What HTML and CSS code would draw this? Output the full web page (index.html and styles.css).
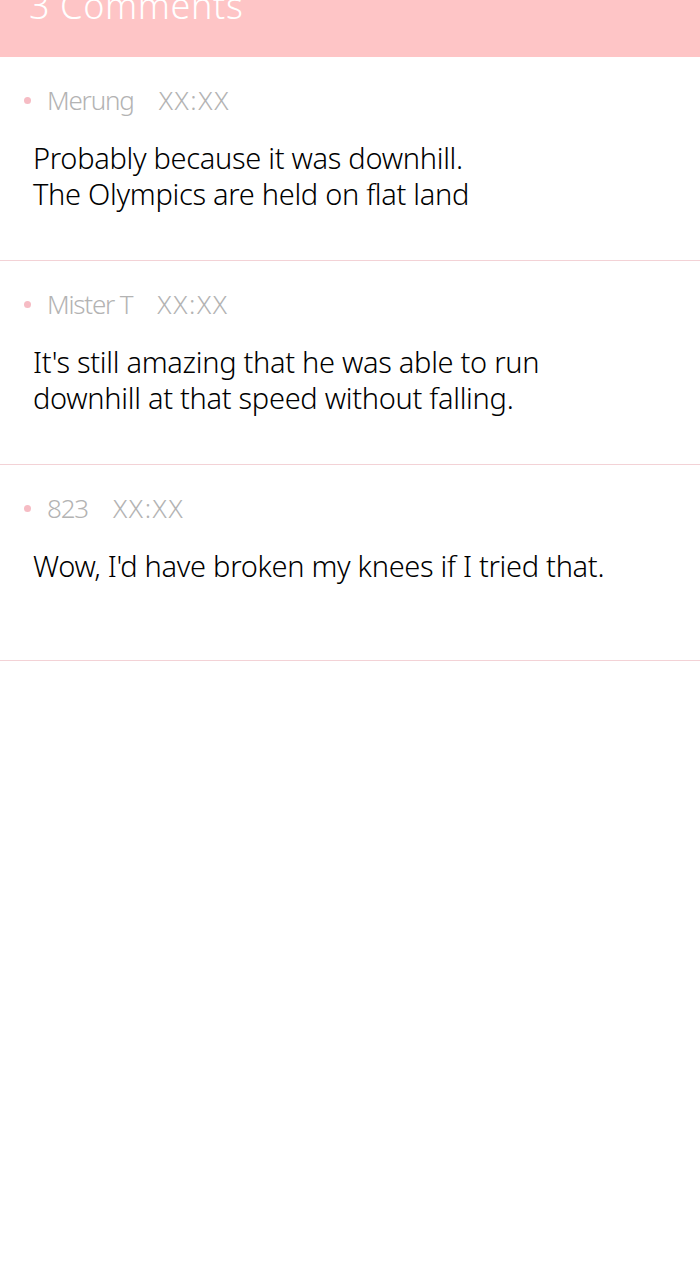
FILE: index.html
```html
<!DOCTYPE html>
<html lang="en">
<head>
  <meta charset="UTF-8">
  <meta name="viewport" content="width=device-width, initial-scale=1.0">
  <title>Comments</title>
  <link rel="stylesheet" href="styles.css">
</head>
<body>
  <header class="comments-header">
    <h1>3 Comments</h1>
  </header>

  <ul class="comment-list">
    <li class="comment">
      <div class="comment-meta">
        <span class="dot"></span>
        <span class="author">Merung</span>
        <span class="time">XX:XX</span>
      </div>
      <p class="comment-body">Probably because it was downhill.<br>The Olympics are held on flat land</p>
    </li>
    <li class="comment">
      <div class="comment-meta">
        <span class="dot"></span>
        <span class="author">Mister T</span>
        <span class="time">XX:XX</span>
      </div>
      <p class="comment-body">It's still amazing that he was able to run<br>downhill at that speed without falling.</p>
    </li>
    <li class="comment">
      <div class="comment-meta">
        <span class="dot"></span>
        <span class="author">823</span>
        <span class="time">XX:XX</span>
      </div>
      <p class="comment-body">Wow, I'd have broken my knees if I tried that.</p>
    </li>
  </ul>
</body>
</html>
```

FILE: styles.css
```css
body {
  font-family: "Noto Sans", Arial, sans-serif;
  margin: 0;
  padding: 0;
  background-color: #fff;
  color: #000;
}
.comments-header {
  height: 57px;
  background-color: #fec5c6;
  overflow: hidden;
  display: flex;
  align-items: flex-end;
  padding: 0 29px;
}
.comments-header h1 {
  margin: 0 0 33px;
  font-size: 36px;
  font-weight: 300;
  line-height: 1;
  color: #fff;
  letter-spacing: 0.6px;
}
.comment-list {
  list-style: none;
  margin: 0;
  padding: 0;
}
.comment {
  min-height: 196px;
  padding: 27px 20px 48px 24px;
  border-bottom: 1px solid #f3d2d6;
  box-sizing: border-box;
}
.comment-meta {
  display: flex;
  align-items: center;
  font-size: 26px;
  font-weight: 330;
  line-height: 32px;
  color: #b3b3b3;
  letter-spacing: -1.2px;
}
.dot {
  width: 7px;
  height: 7px;
  border-radius: 50%;
  background-color: #f6bcc4;
  margin-right: 16px;
}
.author {
  margin-right: 25px;
}
.time {
  letter-spacing: 1.6px;
}
.comment-body {
  margin: 24px 0 0 9px;
  font-size: 29px;
  font-weight: 360;
  line-height: 36px;
  letter-spacing: -0.3px;
}
```
